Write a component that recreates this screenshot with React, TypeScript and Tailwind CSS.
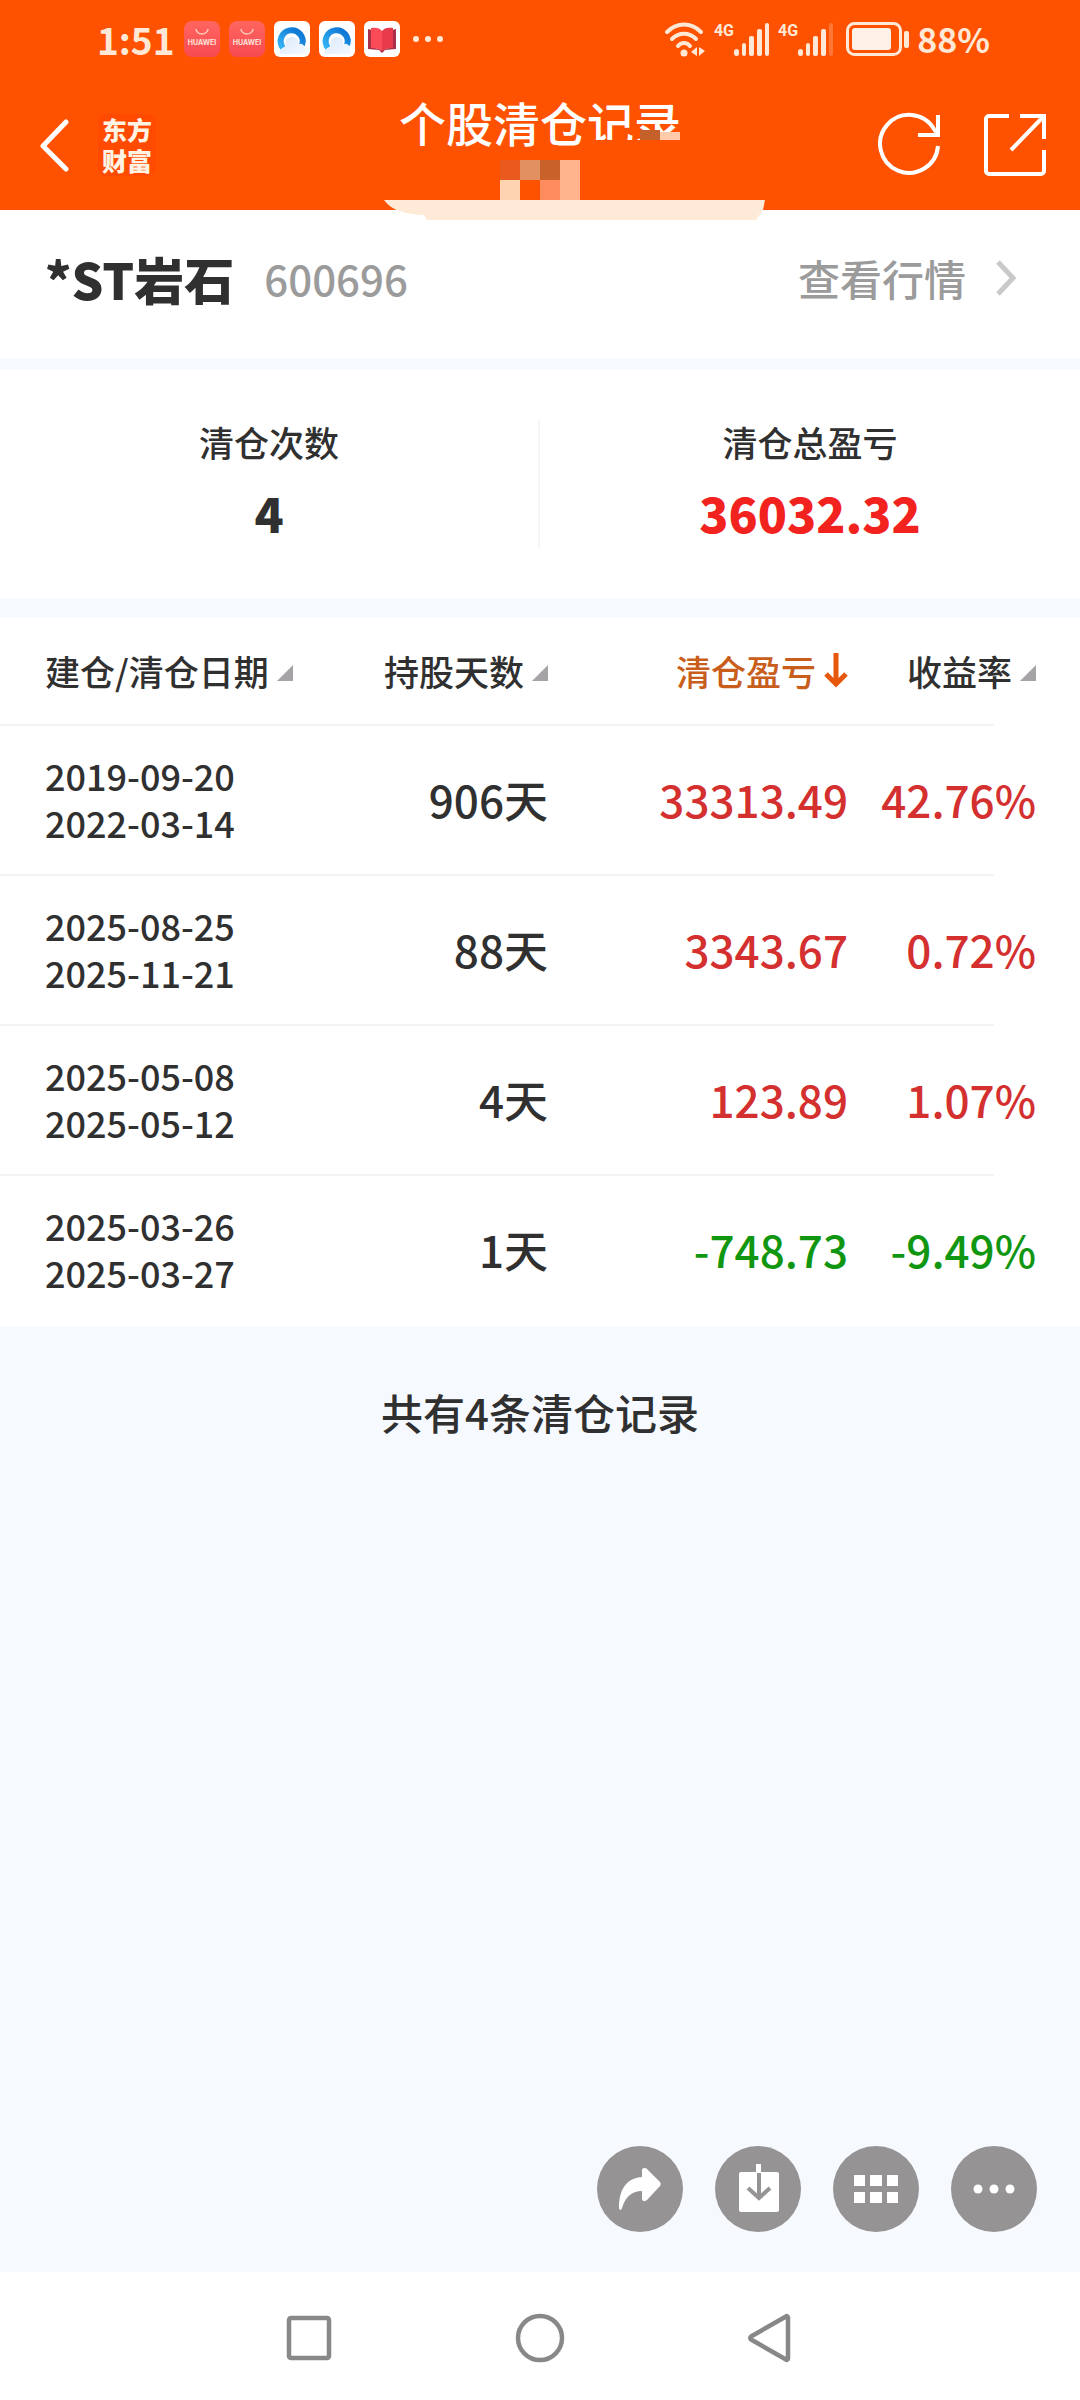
import React, { useState } from 'react';

type SortKey = 'date' | 'days' | 'profit' | 'rate';

interface ClearRecord {
  openDate: string;
  closeDate: string;
  days: number;
  profit: number;
  rate: number;
}

const records: ClearRecord[] = [
  { openDate: '2019-09-20', closeDate: '2022-03-14', days: 906, profit: 33313.49, rate: 42.76 },
  { openDate: '2025-08-25', closeDate: '2025-11-21', days: 88, profit: 3343.67, rate: 0.72 },
  { openDate: '2025-05-08', closeDate: '2025-05-12', days: 4, profit: 123.89, rate: 1.07 },
  { openDate: '2025-03-26', closeDate: '2025-03-27', days: 1, profit: -748.73, rate: -9.49 },
];

function StoreIcon() {
  return (
    <svg className="size-9" viewBox="0 0 36 36">
      <defs>
        <linearGradient id="store" x1="0" y1="0" x2="0" y2="1">
          <stop offset="0" stopColor="#ff6660" />
          <stop offset="1" stopColor="#f74a52" />
        </linearGradient>
      </defs>
      <rect width="36" height="36" rx="8" fill="url(#store)" />
      <path d="M12 8a6 5 0 0 0 12 0" fill="none" stroke="#ffc9b8" strokeWidth="1.5" />
      <text x="18" y="24" textAnchor="middle" fontSize="7" fontWeight="700" fill="#ffe4dc" fontFamily="Inter, sans-serif">
        HUAWEI
      </text>
    </svg>
  );
}

function BrowserIcon() {
  return (
    <svg className="size-9" viewBox="0 0 36 36">
      <defs>
        <linearGradient id="ring" x1="0" y1="1" x2="1" y2="0">
          <stop offset="0" stopColor="#35b4f5" />
          <stop offset="1" stopColor="#0a6fd0" />
        </linearGradient>
        <linearGradient id="cloud" x1="0" y1="0" x2="1" y2="1">
          <stop offset="0" stopColor="#dbe9fb" />
          <stop offset="1" stopColor="#f4f9ff" />
        </linearGradient>
      </defs>
      <rect width="36" height="36" rx="6" fill="#fff" />
      <path d="M9 27A11 11 0 1 1 28 24" fill="none" stroke="url(#ring)" strokeWidth="6" />
      <path d="M6 33c-1-4 2-7 6-7-2-6 1-10 6-10 5 0 7 4 6 8 4-4 8 2 8 9z" fill="url(#cloud)" />
    </svg>
  );
}

function BookIcon() {
  return (
    <svg className="size-9" viewBox="0 0 36 36">
      <rect width="36" height="36" rx="6" fill="#fff" />
      <path d="M4 8l4 1v17l10 3 10-3V9l4-1v20l-11 1-3 3-3-3-11-1z" fill="#a8304a" />
      <path d="M7 7c5-1 9 0 11 3v20c-2-2-6-3-11-3z" fill="#fb4b59" />
      <path d="M29 7c-5-1-9 0-11 3v20c2-2 6-3 11-3z" fill="#e93a4c" />
    </svg>
  );
}

function WifiIcon() {
  return (
    <svg className="h-9 w-[42px]" viewBox="0 0 42 36" fill="none" stroke="#ffe9d6" strokeWidth="4" strokeLinecap="round">
      <path d="M3 11C13 1 27 1 37 11" />
      <path d="M8 18c7-7 17-7 24 0" />
      <path d="M14 25c3-4 9-4 12 0" />
      <circle cx="20" cy="32" r="3.5" fill="#ffe9d6" stroke="none" />
      <path d="M33 26v9l-6-4zM35 35v-9l6 4z" fill="#ffe9d6" stroke="none" />
    </svg>
  );
}

function Signal({ weak = false }: { weak?: boolean }) {
  return (
    <div className="flex">
      <span className="font-['Roboto',sans-serif] text-[16px] leading-5 font-bold">4G</span>
      <svg className="h-9 w-9" viewBox="0 0 36 36" fill="#ffe9d6">
        <rect x="0" y="28" width="5" height="7" rx="2.5" />
        <rect x="8" y="22" width="4" height="13" rx="2" />
        <rect x="15" y="15" width="5" height="20" rx="2" />
        <rect x="23" y="8" width="5" height="27" rx="2" />
        <rect x="31" y="2" width="4" height="33" rx="2" opacity={weak ? 0.25 : 1} />
      </svg>
    </div>
  );
}

function StatusBar() {
  return (
    <div className="flex h-[78px] items-center justify-between pr-[90px] pl-[97px] text-[#ffe9d6]">
      <div className="flex items-center gap-[9px]">
        <span className="text-[37px] leading-9 font-bold">1:51</span>
        <StoreIcon />
        <StoreIcon />
        <BrowserIcon />
        <BrowserIcon />
        <BookIcon />
        <span className="ml-1 flex gap-[6px]">
          <i className="size-[6px] rounded-full bg-[#ffe9d6]" />
          <i className="size-[6px] rounded-full bg-[#ffe9d6]" />
          <i className="size-[6px] rounded-full bg-[#ffe9d6]" />
        </span>
      </div>
      <div className="flex items-center gap-2">
        <WifiIcon />
        <Signal />
        <Signal weak />
        <svg className="ml-1 h-[34px] w-[63px]" viewBox="0 0 63 34">
          <rect x="1.5" y="1.5" width="53" height="31" rx="7" fill="none" stroke="#ffe9d6" strokeWidth="3" />
          <rect x="6" y="6" width="39" height="22" rx="3" fill="#fff0e8" />
          <rect x="58" y="9" width="5" height="17" rx="2" fill="#ffe9d6" />
        </svg>
        <span className="text-[34px] leading-9 font-bold">88%</span>
      </div>
    </div>
  );
}

// Pixelated patch that hides the account name under the title
function PrivacyMosaic() {
  return (
    <svg className="pointer-events-none absolute top-[120px] left-1/2 h-[100px] w-[480px] -translate-x-1/2" viewBox="300 120 480 100">
      <path d="M594 140h92v12h-92z" fill="#ff5200" />
      <path d="M640 130h20v10h-20z" fill="#c4602a" />
      <path d="M660 132h20v8h-20z" fill="#ffcba8" />
      <path d="M500 160h20v20h-20z" fill="#ea5a1e" />
      <path d="M520 160h20v20h-20z" fill="#e2905f" />
      <path d="M540 160h20v20h-20z" fill="#c8622a" />
      <path d="M560 160h20v40h-20z" fill="#ffb48e" />
      <path d="M500 180h20v20h-20z" fill="#fdd3b2" />
      <path d="M540 180h20v20h-20z" fill="#ff8c5e" />
      <path d="M384 200h381l-2 10-7 10H427l-3-5c-20-1-33-5-40-15z" fill="#ffead7" />
    </svg>
  );
}

function Header() {
  return (
    <header className="relative bg-[#ff5200] text-white">
      <StatusBar />
      <div className="grid h-[132px] grid-cols-3 items-start">
        <div className="flex items-center gap-7 pt-[36px] pl-10">
          <button type="button" aria-label="返回">
            <svg className="h-[60px] w-[30px]" viewBox="0 0 30 60" fill="none" stroke="currentColor" strokeWidth="5" strokeLinecap="round" strokeLinejoin="round">
              <path d="M26 7L3 31l23 23" />
            </svg>
          </button>
          <span className="flex flex-col rounded-lg bg-[#ff4a00] px-1 text-[25px] leading-[31px] font-black text-[#fff3e4]">
            <span>东方</span>
            <span>财富</span>
          </span>
        </div>
        <h1 className="pt-5 text-center text-[47px] leading-[48px] font-medium whitespace-nowrap">个股清仓记录</h1>
        <div className="flex justify-end gap-10 pt-[34px] pr-[34px]">
          <button type="button" aria-label="刷新">
            <svg className="size-16" viewBox="0 0 64 64" fill="none" stroke="currentColor" strokeWidth="4">
              <path d="M60 34A29 29 0 1 1 56 17L60 23" />
              <path d="M60 3v20H40" />
            </svg>
          </button>
          <button type="button" aria-label="分享">
            <svg className="size-16" viewBox="0 0 64 64" fill="none" stroke="currentColor" strokeWidth="4">
              <path d="M27 4H7a3 3 0 0 0-3 3v52a3 3 0 0 0 3 3h52a3 3 0 0 0 3-3V38" />
              <path d="M38 4h24v23M61 5L29 38" />
            </svg>
          </button>
        </div>
      </div>
      <PrivacyMosaic />
    </header>
  );
}

function SortMark({ active }: { active: boolean }) {
  if (active) {
    return (
      <svg className="ml-2 h-9 w-6" viewBox="0 0 24 36" fill="none" stroke="#e6590c" strokeWidth="5">
        <path d="M12 0v31M2 21l10 10 10-10" />
      </svg>
    );
  }
  return (
    <svg className="mt-1 ml-2 size-4" viewBox="0 0 16 16">
      <path d="M16 0v16H0z" fill="#a5a3a5" />
    </svg>
  );
}

interface SortHeadProps {
  label: string;
  active: boolean;
  className?: string;
  onSort: () => void;
}

function SortHead({ label, active, className = '', onSort }: SortHeadProps) {
  return (
    <th className={`p-0 font-medium ${className}`} aria-sort={active ? 'descending' : 'none'}>
      <button type="button" onClick={onSort} className={`inline-flex items-center whitespace-nowrap ${active ? 'text-[#c85d1c]' : ''}`}>
        {label}
        <SortMark active={active} />
      </button>
    </th>
  );
}

function RecordTable() {
  const [sortKey, setSortKey] = useState<SortKey>('profit');

  const valueOf = (r: ClearRecord) => {
    if (sortKey === 'date') return Date.parse(r.closeDate);
    return r[sortKey];
  };
  const rows = [...records].sort((a, b) => valueOf(b) - valueOf(a));

  return (
    <section className="bg-white pb-[2px]">
      <table className="w-full table-fixed border-collapse">
        <thead>
          <tr className="h-[106px] text-[35px] leading-[48px]">
            <SortHead label="建仓/清仓日期" active={sortKey === 'date'} onSort={() => setSortKey('date')} className="w-[31%] pl-[45px] text-left" />
            <SortHead label="持股天数" active={sortKey === 'days'} onSort={() => setSortKey('days')} className="text-right" />
            <SortHead label="清仓盈亏" active={sortKey === 'profit'} onSort={() => setSortKey('profit')} className="w-[300px] text-right" />
            <SortHead label="收益率" active={sortKey === 'rate'} onSort={() => setSortKey('rate')} className="w-[232px] pr-11 text-right" />
          </tr>
        </thead>
        <tbody>
          {rows.map((r) => {
            const color = r.profit < 0 ? 'text-[#119611]' : 'text-[#d3302f]';
            return (
              <tr
                key={r.openDate}
                className="h-[150px] bg-[linear-gradient(#f3f3f3,#f3f3f3)] bg-[length:92%_2px] bg-no-repeat text-right text-[44px] font-medium"
              >
                <td className="p-0 pl-[45px] text-left text-[36px] leading-[47px]">
                  {r.openDate}
                  <br />
                  {r.closeDate}
                </td>
                <td className="p-0">{r.days}天</td>
                <td className={`p-0 ${color}`}>{r.profit.toFixed(2)}</td>
                <td className={`p-0 pr-11 ${color}`}>{r.rate.toFixed(2)}%</td>
              </tr>
            );
          })}
        </tbody>
      </table>
    </section>
  );
}

function RoundButton({ label, children }: { label: string; children: React.ReactNode }) {
  return (
    <button type="button" aria-label={label} className="size-[86px] rounded-full bg-[#969395]">
      <svg viewBox="0 0 86 86" fill="#fff">
        {children}
      </svg>
    </button>
  );
}

function FloatingTools() {
  return (
    <div className="mt-auto flex justify-end gap-8 pr-[43px] pb-10">
      <RoundButton label="转发">
        <path d="M45 31v-7c0-2 3-3 5-1l13 13c1 2 1 2 0 4L50 54c-2 2-5 1-5-1v-8c-11 0-17 7-20 17-1 3-3 2-3 0 0-18 7-30 23-31z" />
      </RoundButton>
      <RoundButton label="保存">
        <rect x="24" y="26" width="40" height="40" rx="2" />
        <rect x="41" y="18" width="5" height="9" />
        <path d="M44 27v23M33 42l11 10 11-10" fill="none" stroke="#969395" strokeWidth="4" />
      </RoundButton>
      <RoundButton label="全部">
        <path d="M21 29h11v11H21zM37 29h12v11H37zM54 29h11v11H54zM21 46h11v11H21zM37 46h12v11H37zM54 46h11v11H54z" />
      </RoundButton>
      <RoundButton label="更多">
        <circle cx="27" cy="43" r="4.5" />
        <circle cx="43" cy="43" r="4.5" />
        <circle cx="59" cy="43" r="4.5" />
      </RoundButton>
    </div>
  );
}

function NavBar() {
  return (
    <nav className="flex h-32 items-center justify-center gap-[180px] bg-white pt-1 text-[#878887]">
      <button type="button" aria-label="最近任务">
        <svg className="size-[50px]" viewBox="0 0 50 50" fill="none" stroke="currentColor" strokeWidth="4.5">
          <rect x="4" y="5" width="40" height="40" rx="2" />
        </svg>
      </button>
      <button type="button" aria-label="主页">
        <svg className="size-[50px]" viewBox="0 0 50 50" fill="none" stroke="currentColor" strokeWidth="4.5">
          <circle cx="25" cy="25" r="22" />
        </svg>
      </button>
      <button type="button" aria-label="返回上一级">
        <svg className="size-[50px]" viewBox="0 0 50 50" fill="none" stroke="currentColor" strokeWidth="4.5" strokeLinejoin="round">
          <path d="M41 3.5c1-.8 2 0 2 1v41c0 1-1 1.8-2 1L6 26.5c-1-.8-1-2 0-3z" />
        </svg>
      </button>
    </nav>
  );
}

export default function App() {
  return (
    <div className="flex min-h-screen flex-col bg-[#f6faff] font-['Noto_Sans_CJK_SC',sans-serif] font-medium text-[#303030]">
      <Header />

      <section className="flex h-[148px] items-center justify-between bg-white pr-[62px] pb-3 pl-[45px]">
        <div className="flex items-center gap-[30px]">
          <h2 className="text-[50px] leading-[64px] font-black">*ST岩石</h2>
          <span className="text-[42px] leading-[64px] text-[#9b9b9b]">600696</span>
        </div>
        <a href="#quote" className="flex items-center gap-7 text-[42px] leading-[64px] text-[#9b9b9b]">
          查看行情
          <svg className="h-9 w-6" viewBox="0 0 24 36" fill="none" stroke="#c9c9c9" strokeWidth="5">
            <path d="M4 2l15 16L4 34" />
          </svg>
        </a>
      </section>

      <section className="mt-3 grid h-[228px] grid-cols-2 items-center bg-white text-center">
        <div className="border-r-2 border-[#f5f5f5] pb-1">
          <div className="text-[35px] leading-[44px]">清仓次数</div>
          <div className="mt-4 text-[48px] leading-[64px] font-black">4</div>
        </div>
        <div className="pb-1">
          <div className="text-[35px] leading-[44px]">清仓总盈亏</div>
          <div className="mt-4 text-[48px] leading-[64px] font-black text-[#f2231f]">36032.32</div>
        </div>
      </section>

      <div className="h-5" />
      <RecordTable />

      <p className="mt-14 text-center text-[42px] leading-[60px]">共有4条清仓记录</p>

      <FloatingTools />
      <NavBar />
    </div>
  );
}
